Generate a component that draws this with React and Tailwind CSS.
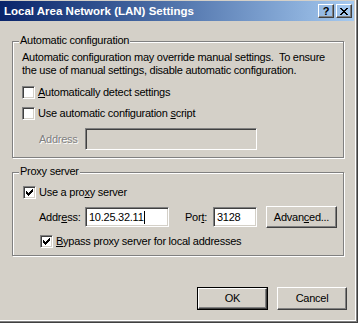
import React from "react";

// Win2000 style bevels
const sunken =
  "border border-t-[#808080] border-l-[#808080] border-r-white border-b-white shadow-[inset_1px_1px_0_#404040,inset_-1px_-1px_0_#d4d0c8]";
const raised =
  "border border-t-white border-l-white border-r-[#404040] border-b-[#404040] shadow-[inset_-1px_-1px_0_#808080]";
const etched =
  "border border-[#808080] shadow-[1px_1px_0_#fff,inset_1px_1px_0_#fff]";

const Check = () => (
  <svg width="7" height="7" viewBox="0 0 7 7" shapeRendering="crispEdges">
    <path d="M6 0h1v3h-1v1h-1v1h-1v1h-1v1h-1v-1h-1v-1h-1v-3h1v1h1v1h1v-1h1v-1h1v-1h1z" fill="#000" />
  </svg>
);

const Checkbox = ({ checked }) => (
  <span className={`${sunken} w-[13px] h-[13px] bg-white flex items-center justify-center shrink-0`}>
    {checked && <Check />}
  </span>
);

const GroupBox = ({ label, className, children }) => (
  <div className={`relative ${etched} ${className}`}>
    <span className="absolute top-[-8px] left-[6px] px-[1px] bg-[#d4d0c8] leading-[13px]">{label}</span>
    {children}
  </div>
);

const Btn = ({ children, isDefault, className }) => (
  <div className={`${isDefault ? "border border-black" : ""} ${className}`}>
    <div className={`${raised} h-full w-full flex items-center justify-center`}>{children}</div>
  </div>
);

export default function App() {
  return (
    <div
      className="w-[358px] h-[323px] bg-[#d4d0c8] text-black text-[11px] leading-[13px] tracking-[-0.25px] flex flex-col border-r border-b border-[#404040] shadow-[inset_-1px_-1px_0_#808080,inset_-2px_-2px_0_#fff] overflow-hidden"
      style={{ fontFamily: '"Liberation Sans", Arial, sans-serif' }}
    >
      {/* title bar */}
      <div className="mt-px mr-[3px] h-[20px] bg-gradient-to-r from-[#0a246a] to-[#a6caf0] flex items-center pl-[4px] pr-[2px]">
        <span className="text-white font-bold text-[11.5px] tracking-normal flex-1">Local Area Network (LAN) Settings</span>
        <Btn className="w-[16px] h-[14px]">
          <span className="font-bold text-[11px] leading-none tracking-normal">?</span>
        </Btn>
        <Btn className="w-[16px] h-[14px] ml-[2px]">
          <svg width="8" height="7" viewBox="0 0 8 7" shapeRendering="crispEdges">
            <path d="M0 0h2v1h1v1h2v-1h1v-1h2v1h-1v1h-1v1h-1v1h1v1h1v1h1v1h-2v-1h-1v-1h-2v1h-1v1h-2v-1h1v-1h1v-1h1v-1h-1v-1h-1z" fill="#000" />
          </svg>
        </Btn>
      </div>

      <div className="pl-[12px] flex flex-col">
        <GroupBox label="Automatic configuration" className="mt-[20px] w-[332px] h-[117px] pl-[9px] pt-[9px]">
          <p>Automatic configuration may override manual settings.&nbsp; To ensure</p>
          <p>the use of manual settings, disable automatic configuration.</p>
          <div className="mt-[9px] flex items-center gap-[3px] h-[13px]">
            <Checkbox />
            <span><u>A</u>utomatically detect settings</span>
          </div>
          <div className="mt-[8px] flex items-center gap-[3px] h-[13px]">
            <Checkbox />
            <span>Use automatic configuration <u>s</u>cript</span>
          </div>
          <div className="mt-[8px] flex items-center h-[22px]">
            <span className="ml-[17px] w-[46px] text-[#808080] [text-shadow:1px_1px_0_#fff]">Address</span>
            <div className={`${sunken} w-[172px] h-[22px] bg-[#d4d0c8]`} />
          </div>
        </GroupBox>

        <GroupBox label="Proxy server" className="mt-[14px] w-[332px] h-[84px] pl-[10px] pt-[13px]">
          <div className="flex items-center gap-[3px] h-[13px]">
            <Checkbox checked />
            <span>Use a pro<u>x</u>y server</span>
          </div>
          <div className="mt-[7px] flex items-center h-[22px]">
            <span className="ml-[16px] w-[46px]">Addr<u>e</u>ss:</span>
            <div className={`${sunken} w-[84px] h-[20px] bg-white flex items-center pl-[3px]`}>
              <span>10.25.32.11</span>
              <span className="w-px h-[13px] bg-black" />
            </div>
            <span className="ml-[16px] w-[28px]">Por<u>t</u>:</span>
            <div className={`${sunken} w-[44px] h-[20px] bg-white flex items-center pl-[3px]`}>3128</div>
            <Btn className="ml-[9px] w-[71px] h-[22px]">
              <span>Advan<u>c</u>ed...</span>
            </Btn>
          </div>
          <div className="mt-[7px] ml-[17px] flex items-center gap-[3px] h-[13px]">
            <Checkbox checked />
            <span><u>B</u>ypass proxy server for local addresses</span>
          </div>
        </GroupBox>

        <div className="mt-[31px] pr-[11px] flex justify-end gap-[9px] w-[346px]">
          <Btn isDefault className="w-[71px] h-[23px]">OK</Btn>
          <Btn className="w-[70px] h-[23px]">Cancel</Btn>
        </div>
      </div>
    </div>
  );
}
